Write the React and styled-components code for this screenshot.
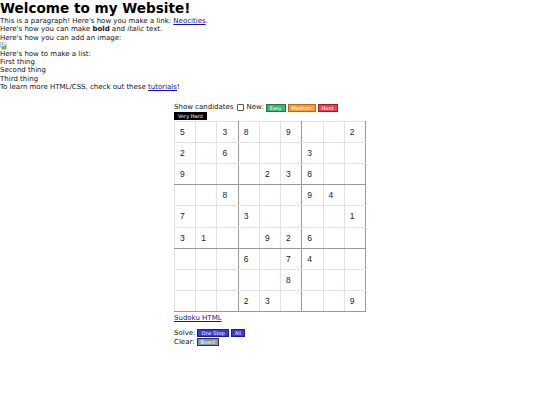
import React from 'react'
import styled, { createGlobalStyle } from 'styled-components'

const GlobalStyle = createGlobalStyle`
    html, body {
        margin: 0;
        padding: 0;
        background: #fff;
    }
    body {
        font-family: "DejaVu Sans", Verdana, sans-serif;
        font-size: 7px;
        line-height: 8.3px;
        color: #111;
    }
`

const Page = styled.div`
    width: 540px;
    height: 405px;
    overflow: hidden;
`

const Title = styled.h1`
    margin: 0;
    font-size: 13.6px;
    line-height: 17px;
    font-weight: bold;
    color: #000;
`

const Line = styled.div``

const Link = styled.a`
    color: #1a0dab;
    text-decoration: underline;
`

const ImageLine = styled.div`
    height: 8px;
    display: flex;
    align-items: center;
`

const Sudoku = styled.div`
    width: 192px;
    margin: 12px auto 0;
`

const Controls = styled.div`
    display: flex;
    flex-wrap: wrap;
    align-items: center;
    gap: 0 2px;
`

const Check = styled.span`
    display: inline-block;
    width: 5px;
    height: 5px;
    border: 1px solid #555;
    border-radius: 1px;
    margin: 0 1px;
    background: #fff;
`

const Btn = styled.button`
    font-family: "DejaVu Sans", Verdana, sans-serif;
    font-size: 5px;
    line-height: 6px;
    padding: 0 3px;
    margin: 0;
    border: 1px solid ${p => p.$border};
    background: ${p => p.$bg};
    color: ${p => p.$color || '#fff'};
    cursor: pointer;
`

const Break = styled.div`
    flex-basis: 100%;
    height: 0;
`

const Grid = styled.table`
    border-collapse: collapse;
    margin-top: 1px;
    border: 1px solid #999;
`

const Cell = styled.td`
    width: 21.3px;
    height: 21.2px;
    padding: 0 0 0 5px;
    box-sizing: border-box;
    font-family: "Liberation Sans", Arial, sans-serif;
    font-size: 8.5px;
    color: #222;
    text-align: left;
    vertical-align: middle;
    border: 1px solid #e2e2e2;
    border-right-color: ${p => (p.$boxRight ? '#999' : '#e2e2e2')};
    border-bottom-color: ${p => (p.$boxBottom ? '#999' : '#e2e2e2')};
`

const Footer = styled.div`
    margin-top: 2px;
`

const ActionRow = styled.div`
    display: flex;
    align-items: center;
    gap: 2px;
    height: 9px;
`

const Spacer = styled.div`
    height: 6px;
`

const puzzle = [
    '5.38.9..2',
    '2.6...3..',
    '9...238..',
    '..8...94.',
    '7..3....1',
    '31..926..',
    '...6.74..',
    '.....8...',
    '...23...9',
]

const BrokenImage = () => (
    <svg width="8" height="8" viewBox="0 0 16 16">
        <path d="M1 1h9l3 3v3l-2 2-2-2-3 3-2-2-3 3z" fill="#e8eef5" stroke="#8a9bb0" strokeWidth="1" />
        <path d="M3 10l3-3 2 2 3-3 2 2v7H3z" fill="#7cb342" />
        <circle cx="5" cy="4.5" r="1.3" fill="#4a90d9" />
    </svg>
)

const App = () => {
    return (
        <Page>
            <GlobalStyle />
            <Title>Welcome to my Website!</Title>
            <Line>
                This is a paragraph! Here's how you make a link: <Link href="#">Neocities</Link>.
            </Line>
            <Line>
                Here's how you can make <b>bold</b> and <i>italic</i> text.
            </Line>
            <Line>Here's how you can add an image:</Line>
            <ImageLine>
                <BrokenImage />
            </ImageLine>
            <Line>Here's how to make a list:</Line>
            <Line>First thing</Line>
            <Line>Second thing</Line>
            <Line>Third thing</Line>
            <Line>
                To learn more HTML/CSS, check out these <Link href="#">tutorials</Link>!
            </Line>

            <Sudoku>
                <Controls>
                    <span>Show candidates</span>
                    <Check />
                    <span>New:</span>
                    <Btn $bg="#3cb371" $border="#1e7a45">Easy</Btn>
                    <Btn $bg="#f39c32" $border="#b86a10">Medium</Btn>
                    <Btn $bg="#e8434e" $border="#9e1d26">Hard</Btn>
                    <Break />
                    <Btn $bg="#000" $border="#000">Very Hard</Btn>
                </Controls>
                <Grid>
                    <tbody>
                        {puzzle.map((row, r) => (
                            <tr key={r}>
                                {row.split('').map((ch, c) => (
                                    <Cell key={c} $boxRight={c % 3 === 2} $boxBottom={r % 3 === 2}>
                                        {ch === '.' ? '' : ch}
                                    </Cell>
                                ))}
                            </tr>
                        ))}
                    </tbody>
                </Grid>
                <Footer>
                    <Link href="#">Sudoku HTML</Link>
                </Footer>
                <Spacer />
                <ActionRow>
                    <span>Solve:</span>
                    <Btn $bg="#3b3bd9" $border="#1c1c8c">One Step</Btn>
                    <Btn $bg="#3b3bd9" $border="#1c1c8c">All</Btn>
                </ActionRow>
                <ActionRow>
                    <span>Clear:</span>
                    <Btn $bg="#8a98ad" $border="#333">Board</Btn>
                </ActionRow>
            </Sudoku>
        </Page>
    )
}

export default App
